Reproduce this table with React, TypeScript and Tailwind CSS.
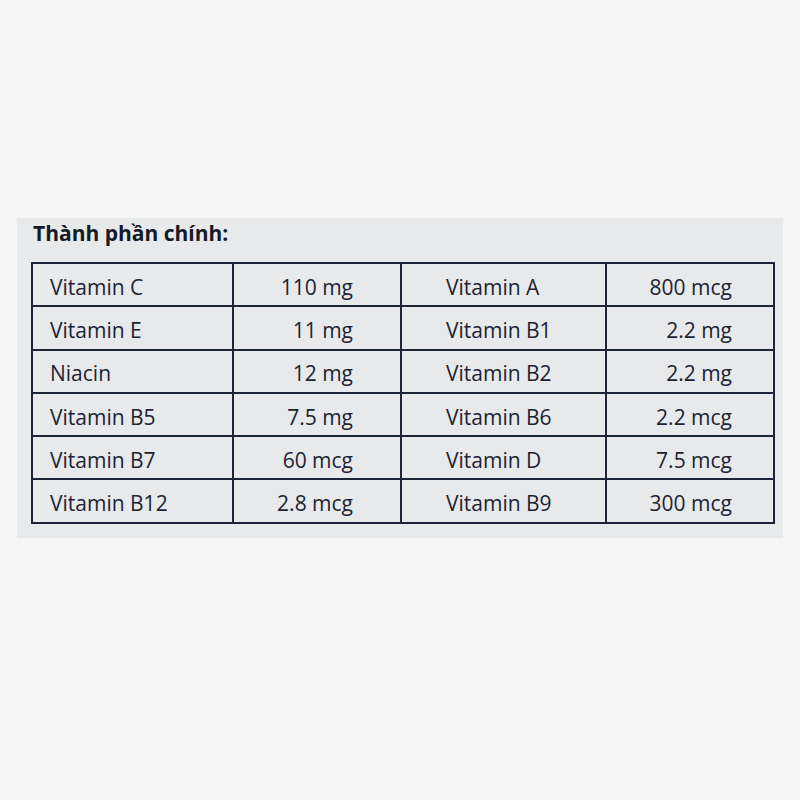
const rows = [
  ["Vitamin C", "110 mg", "Vitamin A", "800 mcg"],
  ["Vitamin E", "11 mg", "Vitamin B1", "2.2 mg"],
  ["Niacin", "12 mg", "Vitamin B2", "2.2 mg"],
  ["Vitamin B5", "7.5 mg", "Vitamin B6", "2.2 mcg"],
  ["Vitamin B7", "60 mcg", "Vitamin D", "7.5 mcg"],
  ["Vitamin B12", "2.8 mcg", "Vitamin B9", "300 mcg"],
];

const App = () => {
  return (
    <div className="min-h-screen w-full bg-[#f5f5f5] pt-[218px] pl-[17px] font-['Open_Sans',sans-serif] text-[#1c2333]">
      {/* Label panel */}
      <div className="w-[766px] h-[320px] bg-[#e8e9eb] pl-[14px] pt-[1px]">
        <h2 className="text-[21px] leading-[28px] font-bold text-[#141a26] pl-[2px]">
          Thành phần chính:
        </h2>

        <table className="mt-[15px] w-[742px] table-fixed border-collapse border-2 border-[#1e2536] text-[21px]">
          <colgroup>
            <col className="w-[201px]" />
            <col className="w-[168px]" />
            <col className="w-[205px]" />
            <col className="w-[168px]" />
          </colgroup>
          <tbody>
            {rows.map((r, i) => (
              <tr key={i} className="h-[43.3px]">
                <td className="border-2 border-[#1e2536] pl-[17px] pt-[4px] leading-[28px]">{r[0]}</td>
                <td className="border-2 border-[#1e2536] pr-[47px] pt-[4px] text-right leading-[28px]">{r[1]}</td>
                <td className="border-2 border-[#1e2536] pl-[44px] pt-[4px] leading-[28px]">{r[2]}</td>
                <td className="border-2 border-[#1e2536] pr-[41px] pt-[4px] text-right leading-[28px]">{r[3]}</td>
              </tr>
            ))}
          </tbody>
        </table>
      </div>
    </div>
  );
};

export default App;
